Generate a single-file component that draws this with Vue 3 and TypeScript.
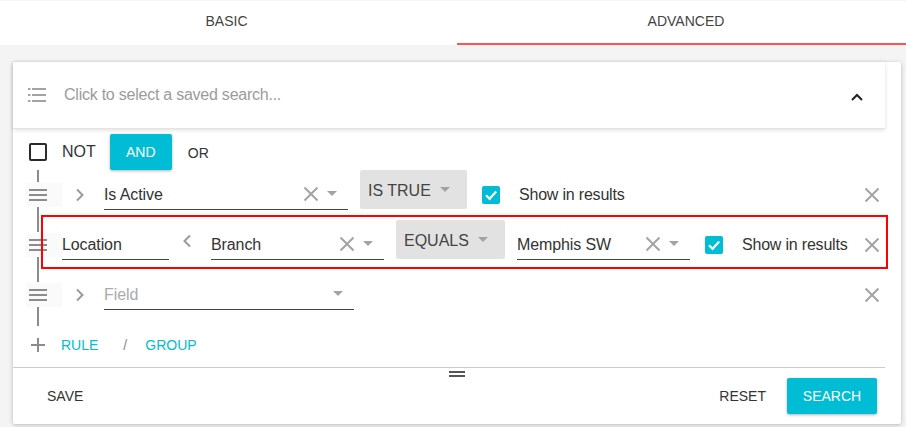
<script setup lang="ts">
const tabs: { label: string; active: boolean }[] = [
  { label: 'BASIC', active: false },
  { label: 'ADVANCED', active: true },
]
</script>

<template>
  <div class="page">
    <svg class="sprite" width="0" height="0" aria-hidden="true">
      <symbol id="ix" viewBox="0 0 16 16"><path d="M1.5 1.5 14.5 14.5M14.5 1.5 1.5 14.5" fill="none" stroke="currentColor" stroke-width="2" /></symbol>
      <symbol id="icheck" viewBox="0 0 18 18"><path d="M4 9.2 7.6 12.8 14.2 5.6" fill="none" stroke="#fff" stroke-width="2.2" /></symbol>
      <symbol id="iright" viewBox="0 0 10 14"><path d="M2 1.5 7.5 7 2 12.5" fill="none" stroke="currentColor" stroke-width="2" /></symbol>
      <symbol id="ileft" viewBox="0 0 10 14"><path d="M8 1.5 2.5 7 8 12.5" fill="none" stroke="currentColor" stroke-width="2" /></symbol>
    </svg>

    <nav class="tabs">
      <div v-for="t in tabs" :key="t.label" class="tab" :class="{ active: t.active }">{{ t.label }}</div>
    </nav>

    <div class="body">
      <section class="card">
        <header class="saved">
          <svg class="list-icon" width="18" height="14" viewBox="0 0 18 14">
            <path d="M0 1h2.4M4 1h14M0 7h2.4M4 7h14M0 13h2.4M4 13h14" fill="none" stroke="#a3a3a3" stroke-width="2" />
          </svg>
          <span class="saved-text">Click to select a saved search...</span>
          <svg class="chev" width="12" height="8" viewBox="0 0 12 8">
            <path d="M1 7 6 2l5 5" fill="none" stroke="#222" stroke-width="2" />
          </svg>
        </header>

        <div class="builder">
          <div class="group-head">
            <span class="box"></span>
            <span class="not">NOT</span>
            <button class="btn primary and">AND</button>
            <span class="or">OR</span>
          </div>

          <div class="rule">
            <span class="handle"><i></i></span>
            <svg class="arrow a1" width="10" height="14"><use href="#iright" /></svg>
            <div class="field f-active">
              <span class="val">Is Active</span>
              <svg class="clear" width="16" height="16"><use href="#ix" /></svg>
              <span class="caret"></span>
            </div>
            <div class="op w107">IS TRUE<span class="caret op-caret"></span></div>
            <span class="check c1"><svg width="18" height="18"><use href="#icheck" /></svg></span>
            <span class="show s1">Show in results</span>
            <svg class="remove" width="16" height="16"><use href="#ix" /></svg>
          </div>

          <div class="rule">
            <span class="handle"><i></i></span>
            <div class="field f-loc"><span class="val">Location</span></div>
            <svg class="arrow a2" width="10" height="14"><use href="#ileft" /></svg>
            <div class="field f-branch">
              <span class="val">Branch</span>
              <svg class="clear" width="16" height="16"><use href="#ix" /></svg>
              <span class="caret"></span>
            </div>
            <div class="op w109">EQUALS<span class="caret op-caret"></span></div>
            <div class="field f-branch f-mem">
              <span class="val">Memphis SW</span>
              <svg class="clear" width="16" height="16"><use href="#ix" /></svg>
              <span class="caret"></span>
            </div>
            <span class="check c2"><svg width="18" height="18"><use href="#icheck" /></svg></span>
            <span class="show s2">Show in results</span>
            <svg class="remove" width="16" height="16"><use href="#ix" /></svg>
            <div class="highlight"></div>
          </div>

          <div class="rule">
            <span class="handle"><i></i></span>
            <svg class="arrow a1" width="10" height="14"><use href="#iright" /></svg>
            <div class="field f-field">
              <span class="val placeholder">Field</span>
              <span class="caret"></span>
            </div>
            <svg class="remove" width="16" height="16"><use href="#ix" /></svg>
          </div>

          <div class="connector-end"></div>

          <div class="add-row">
            <svg class="plus" width="14" height="14" viewBox="0 0 14 14">
              <path d="M7 0v14M0 7h14" fill="none" stroke="#8c8c8c" stroke-width="2" />
            </svg>
            <span class="link rule-link">RULE</span>
            <span class="slash">/</span>
            <span class="link">GROUP</span>
          </div>
        </div>

        <footer class="foot">
          <span class="grip"></span>
          <button class="btn flat save">SAVE</button>
          <button class="btn flat reset">RESET</button>
          <button class="btn primary search">SEARCH</button>
        </footer>
      </section>
    </div>
  </div>
</template>

<style>
html, body { margin: 0; background: #f4f4f4; overflow: hidden; }
</style>

<style scoped>
.page {
  width: 906px;
  height: 427px;
  overflow: hidden;
  background: #f4f4f4;
  font-family: "Liberation Sans", Arial, sans-serif;
  font-size: 16px;
  color: #333;
}
.sprite { position: absolute; }
.tabs {
  display: flex;
  gap: 4px;
  width: 915px;
  height: 45px;
  background: #fff;
  border-top: 1px solid #f5f5f5;
  box-sizing: border-box;
}
.tab {
  flex: 0 0 453px;
  height: 44px;
  box-sizing: border-box;
  padding-top: 12px;
  text-align: center;
  font-size: 14px;
  line-height: 17px;
  color: #444;
}
.tab.active {
  flex: 0 0 458px;
  border-bottom: 2px solid #ff5252;
}
.body { padding: 17px 5px 0 13px; }
.card {
  width: 888px;
  height: 362px;
  background: #fff;
  border-radius: 2px;
  box-shadow: 0 1px 4px rgba(0, 0, 0, 0.25);
  display: flex;
  flex-direction: column;
}
.saved {
  width: 872px;
  height: 67px;
  box-sizing: border-box;
  flex: none;
  border-bottom: 1px solid #e4e4e4;
  box-shadow: 0 1px 4px rgba(0, 0, 0, 0.14);
  display: flex;
  align-items: center;
  padding: 0 22px 0 15px;
}
.list-icon { flex: none; }
.saved-text { margin-left: 18px; flex: 1; color: #9b9b9b; letter-spacing: -0.24px; }
.chev { flex: none; margin-top: 3px; }

.builder { flex: 1; position: relative; }
.group-head {
  height: 41px;
  display: flex;
  align-items: flex-start;
  padding: 5px 0 0 16px;
  box-sizing: border-box;
}
.box {
  width: 18px;
  height: 18px;
  box-sizing: border-box;
  border: 2px solid #2b2b2b;
  border-radius: 2px;
  margin-top: 9px;
}
.not { margin-left: 15px; margin-top: 8px; line-height: 19px; color: #333; }
.btn {
  font-family: inherit;
  border: 0;
  background: none;
  padding: 0;
  font-size: 14px;
  border-radius: 2px;
  line-height: 17px;
}
.primary {
  background: #00bcd4;
  color: #fff;
  box-shadow: 0 1px 3px rgba(0, 0, 0, 0.3);
}
.and { width: 62px; height: 36px; margin-left: 14px; }
.or { margin-left: 16px; margin-top: 11px; font-size: 14px; line-height: 17px; color: #333; }

.rule {
  height: 50px;
  position: relative;
  display: flex;
  align-items: flex-start;
  padding-left: 49px;
  box-sizing: border-box;
}
.handle {
  position: absolute;
  left: 13px;
  top: 13px;
  width: 36px;
  height: 24px;
  background: #fafafa;
}
.handle i {
  position: absolute;
  left: 3px;
  top: 6px;
  width: 18px;
  height: 12px;
  box-sizing: border-box;
  border-top: 2px solid #8c8c8c;
  border-bottom: 2px solid #8c8c8c;
}
.handle i::after {
  content: "";
  position: absolute;
  left: 0;
  right: 0;
  top: 3px;
  height: 2px;
  background: #8c8c8c;
}
.rule::before {
  content: "";
  position: absolute;
  left: 24px;
  top: 0;
  width: 2px;
  height: 12px;
  background: #8c8c8c;
}
.rule + .rule::before { top: -13px; height: 25px; }
.connector-end {
  position: absolute;
  left: 24px;
  top: 178px;
  width: 2px;
  height: 19px;
  background: #8c8c8c;
}
.arrow { color: #9a9a9a; flex: none; }
.a1 { margin: 18px 0 0 13px; }
.a2 { margin: 14px 0 0 13px; }
.field {
  display: flex;
  align-items: center;
  border-bottom: 1px solid #444;
  box-sizing: border-box;
  padding-top: 9px;
  flex: none;
  color: #333;
}
.rule .field { height: 40px; }
.val { flex: 1; line-height: 19px; letter-spacing: -0.1px; }
.placeholder { color: #aaa; }
.f-active { width: 244px; margin-left: 19px; }
.f-loc { width: 107px; margin-left: 0; }
.f-branch { width: 173px; margin-left: 19px; }
.f-mem { margin-left: 12px; }
.f-field { width: 250px; margin-left: 19px; }
.clear { color: #a3a3a3; flex: none; width: 16px; height: 16px; margin-top: -1px; }
.caret {
  flex: none;
  width: 0;
  height: 0;
  border-left: 5px solid transparent;
  border-right: 5px solid transparent;
  border-top: 5px solid #a3a3a3;
  margin: -1px 11px 0 8px;
}
.f-field .caret { margin-top: -2px; }
.op {
  height: 39px;
  box-sizing: border-box;
  background: #e2e2e2;
  border-radius: 2px;
  display: flex;
  align-items: flex-start;
  padding: 11px 0 0 8px;
  line-height: 19px;
  color: #444;
  flex: none;
  margin-left: 12px;
}
.w107 { width: 107px; }
.w109 { width: 109px; }
.op-caret { margin: 6px 0 0 9px; }
.check {
  width: 18px;
  height: 18px;
  background: #00bcd4;
  border-radius: 2px;
  flex: none;
}
.check svg { display: block; }
.c1 { margin: 16px 0 0 15px; }
.c2 { margin: 16px 0 0 15px; }
.show { line-height: 19px; color: #333; flex: none; margin-top: 15px; letter-spacing: -0.2px; }
.s1 { margin-left: 19px; }
.s2 { margin-left: 19px; }
.remove {
  position: absolute;
  left: 851px;
  top: 17px;
  color: #a3a3a3;
}
.highlight {
  position: absolute;
  left: 28px;
  top: -5px;
  width: 847px;
  height: 54px;
  box-sizing: border-box;
  border: 2px solid #f00;
  pointer-events: none;
}
.add-row {
  height: 38px;
  box-sizing: border-box;
  display: flex;
  align-items: center;
  padding: 12px 0 0 18px;
  font-size: 14px;
}
.plus { flex: none; }
.link { color: #00bcd4; line-height: 17px; }
.rule-link { margin-left: 16px; }
.slash { margin: 0 18px 0 25px; color: #888; }

.foot {
  flex: none;
  height: 57px;
  width: 872px;
  box-sizing: border-box;
  border-top: 1px solid #ccc;
  position: relative;
  display: flex;
  align-items: flex-start;
  padding: 10px 8px 0 34px;
}
.grip {
  position: absolute;
  left: 436px;
  top: 3px;
  width: 16px;
  height: 6px;
  box-sizing: border-box;
  border-top: 2px solid #555;
  border-bottom: 2px solid #555;
}
.flat { color: #333; height: 36px; background: none; }
.save { margin-right: auto; }
.reset { margin-right: 21px; }
.search { width: 90px; height: 36px; }
</style>
